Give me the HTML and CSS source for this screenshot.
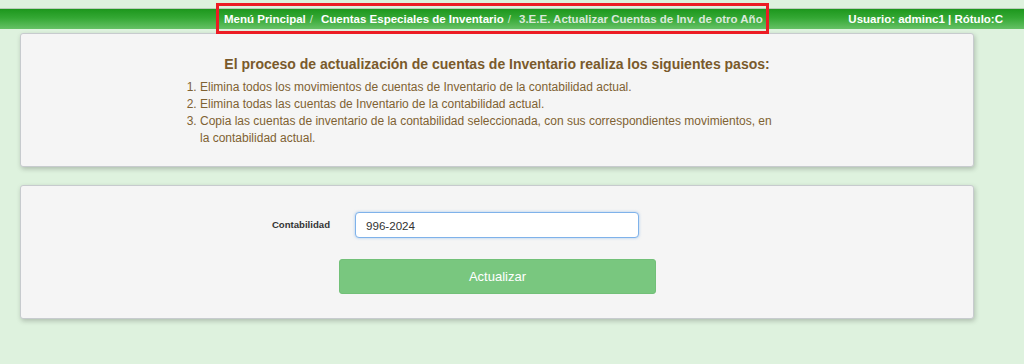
FILE: index.html
```html
<!DOCTYPE html>
<html lang="es">
<head>
    <meta charset="UTF-8">
    <meta name="viewport" content="width=device-width, initial-scale=1.0">
    <title>Actualizar Cuentas de Inv. de otro Año</title>
    <link rel="stylesheet" href="styles.css">
</head>
<body>
    <header class="topbar">
        <nav class="breadcrumb">
            <span class="crumb">Menú Principal</span>
            <span class="sep">/</span>
            <span class="crumb">Cuentas Especiales de Inventario</span>
            <span class="sep">/</span>
            <span class="crumb active">3.E.E. Actualizar Cuentas de Inv. de otro Año</span>
        </nav>
        <div class="user-info">Usuario: adminc1 | Rótulo:C</div>
    </header>

    <main class="main-content">
        <section class="panel info-panel">
            <h2>El proceso de actualización de cuentas de Inventario realiza los siguientes pasos:</h2>
            <ol class="steps">
                <li>Elimina todos los movimientos de cuentas de Inventario de la contabilidad actual.</li>
                <li>Elimina todas las cuentas de Inventario de la contabilidad actual.</li>
                <li>Copia las cuentas de inventario de la contabilidad seleccionada, con sus correspondientes movimientos, en la contabilidad actual.</li>
            </ol>
        </section>

        <section class="panel form-panel">
            <div class="form-row">
                <label for="contabilidad">Contabilidad</label>
                <input type="text" id="contabilidad" value="996-2024">
            </div>
            <div class="form-actions">
                <button type="button">Actualizar</button>
            </div>
        </section>
    </main>
</body>
</html>
```

FILE: styles.css
```css
* {
    margin: 0;
    padding: 0;
    box-sizing: border-box;
}
html {
    background: #fff;
}
body {
    font-family: 'Liberation Sans', Arial, sans-serif;
    background: #def2de;
    min-height: 100vh;
    color: #333;
    padding-top: 8px;
}
.topbar {
    height: 21px;
    display: flex;
    align-items: center;
    background: linear-gradient(to bottom, #1d971d 0%, #34a834 45%, #66c166 100%);
    border-top: 1px solid #b9cdb9;
    color: #fff;
    font-size: 11.5px;
    font-weight: 700;
}
.breadcrumb {
    position: relative;
    display: flex;
    align-items: center;
    margin-left: 216px;
    padding: 0 6px 0 8px;
    height: 100%;
}
.breadcrumb::after {
    content: '';
    position: absolute;
    top: -6px;
    bottom: -5px;
    left: 0;
    right: 0;
    border: 3px solid #ec1c24;
}
.sep {
    color: #cfe8cf;
    font-weight: 400;
    padding: 0 8px 0 4px;
}
.crumb.active {
    color: #dbe9db;
}
.user-info {
    margin-left: auto;
    padding-right: 21px;
}
.main-content {
    padding: 4px 50px 0 20px;
}
.panel {
    background: #f5f5f5;
    border: 1px solid #c7cbce;
    border-radius: 3px;
    box-shadow: 1px 2px 5px rgba(0, 0, 0, 0.22);
}
.info-panel {
    padding: 21px 0 20px;
    height: 134px;
}
.info-panel h2 {
    text-align: center;
    font-size: 14px;
    font-weight: 700;
    color: #7a5a2b;
    line-height: 18px;
    margin-bottom: 6px;
}
.steps {
    width: 572px;
    margin-left: 179px;
    padding-left: 0;
    list-style-position: outside;
    font-size: 12px;
    line-height: 17px;
    color: #7f6232;
}
.form-panel {
    margin-top: 18px;
    height: 134px;
    padding-top: 26px;
}
.form-row {
    display: flex;
    align-items: center;
}
.form-row label {
    width: 309px;
    text-align: right;
    font-size: 9.6px;
    font-weight: 700;
    color: #333;
    margin-top: -2px;
}
input {
    margin-left: 25px;
    width: 284px;
    height: 26px;
    padding: 0 10px;
    border: 1px solid #7fb2ea;
    border-radius: 4px;
    background: #fff;
    font-family: inherit;
    font-size: 11.6px;
    color: #333;
    box-shadow: 0 0 3px rgba(102, 160, 230, 0.55);
    outline: none;
}
.form-actions {
    margin-top: 21px;
    padding-left: 318px;
}
button {
    width: 317px;
    height: 35px;
    background: #79c77f;
    color: #fff;
    border: 1px solid #72c078;
    border-radius: 3px;
    font-family: inherit;
    font-size: 13px;
    cursor: pointer;
}
```
